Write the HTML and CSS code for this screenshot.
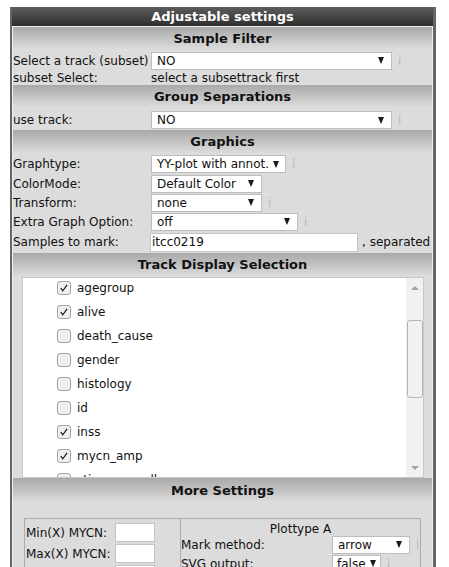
FILE: index.html
```html
<!DOCTYPE html>
<html>
<head>
<meta charset="utf-8">
<link rel="stylesheet" href="styles.css">
</head>
<body>
<div class="panel">
  <div class="title">Adjustable settings</div>
  <div class="inner">
    <div class="sec-head h23">Sample Filter</div>
    <div class="row h21">
      <span class="label">Select a track (subset)</span>
      <div class="sel w241"><span>NO</span><span class="arr"></span></div>
      <span class="info">i</span>
    </div>
    <div class="row h14">
      <span class="label">subset Select:</span>
      <span class="note">select a subsettrack first</span>
    </div>

    <div class="sec-head h23">Group Separations</div>
    <div class="row h22 pt1">
      <span class="label">use track:</span>
      <div class="sel w241"><span>NO</span><span class="arr"></span></div>
      <span class="info">i</span>
    </div>

    <div class="sec-head h24">Graphics</div>
    <div class="row h20">
      <span class="label">Graphtype:</span>
      <div class="sel w135"><span>YY-plot with annot.</span><span class="arr"></span></div>
      <span class="info">i</span>
    </div>
    <div class="row h19">
      <span class="label">ColorMode:</span>
      <div class="sel w111"><span>Default Color</span><span class="arr"></span></div>
    </div>
    <div class="row h19">
      <span class="label">Transform:</span>
      <div class="sel w111"><span>none</span><span class="arr"></span></div>
      <span class="info">i</span>
    </div>
    <div class="row h19">
      <span class="label">Extra Graph Option:</span>
      <div class="sel w147"><span>off</span><span class="arr"></span></div>
      <span class="info">i</span>
    </div>
    <div class="row h22">
      <span class="label">Samples to mark:</span>
      <div class="txt w208">itcc0219</div>
      <span class="after">, separated</span>
    </div>

    <div class="sec-head h24">Track Display Selection</div>
    <div class="list">
      <div class="items">
        <div class="item"><span class="cb on"><svg viewBox="0 0 14 14"><path d="M3.2 7.2 L5.6 10.2 L10.6 3.4"/></svg></span><span>agegroup</span></div>
        <div class="item"><span class="cb on"><svg viewBox="0 0 14 14"><path d="M3.2 7.2 L5.6 10.2 L10.6 3.4"/></svg></span><span>alive</span></div>
        <div class="item"><span class="cb"></span><span>death_cause</span></div>
        <div class="item"><span class="cb"></span><span>gender</span></div>
        <div class="item"><span class="cb"></span><span>histology</span></div>
        <div class="item"><span class="cb"></span><span>id</span></div>
        <div class="item"><span class="cb on"><svg viewBox="0 0 14 14"><path d="M3.2 7.2 L5.6 10.2 L10.6 3.4"/></svg></span><span>inss</span></div>
        <div class="item"><span class="cb on"><svg viewBox="0 0 14 14"><path d="M3.2 7.2 L5.6 10.2 L10.6 3.4"/></svg></span><span>mycn_amp</span></div>
        <div class="item"><span class="cb"></span><span>stime_overall</span></div>
      </div>
      <div class="scrollbar">
        <span class="up"></span>
        <span class="thumb"></span>
        <span class="down"></span>
      </div>
    </div>

    <div class="sec-head h25">More Settings</div>
    <div class="more">
      <div class="cell left">
        <div class="mrow"><span class="mlabel">Min(X) MYCN:</span><div class="txt w40"></div></div>
        <div class="mrow"><span class="mlabel">Max(X) MYCN:</span><div class="txt w40"></div></div>
        <div class="mrow"><span class="mlabel"></span><div class="txt w40"></div></div>
      </div>
      <div class="cell right">
        <div class="ptitle">Plottype A</div>
        <div class="prow">
          <span class="plabel">Mark method:</span>
          <div class="sel w78"><span>arrow</span><span class="arr"></span></div>
          <span class="info">i</span>
        </div>
        <div class="prow">
          <span class="plabel">SVG output:</span>
          <div class="sel w49"><span>false</span><span class="arr"></span></div>
          <span class="info">i</span>
        </div>
      </div>
    </div>
  </div>
</div>
</body>
</html>
```

FILE: styles.css
```css
html, body {
  margin: 0;
  padding: 0;
  background: #fff;
  font-family: "DejaVu Sans", Verdana, sans-serif;
  font-size: 12px;
  color: #111;
}
body {
  padding: 7px 0 0 10px;
}
.panel {
  width: 421px;
  border-left: 2px solid #666;
  border-right: 3px solid #666;
  background: #dcdcdc;
}
.title {
  height: 19px;
  line-height: 19px;
  text-align: center;
  font-weight: bold;
  font-size: 13px;
  color: #fff;
  background: linear-gradient(#5c5c5c, #2f2f2f);
}
.inner {
  border-top: 1px solid #eee;
  border-left: 1px solid #eee;
  border-right: 1px solid #eee;
  background: #dcdcdc;
  height: 560px;
}
.sec-head {
  text-align: center;
  font-weight: bold;
  font-size: 13px;
  color: #111;
  background: linear-gradient(#a9a9a9, #dedede);
}
.h23 { height: 23px; line-height: 23px; }
.h24 { height: 24px; line-height: 24px; }
.h25 { height: 25px; line-height: 25px; }

.row {
  display: flex;
  align-items: center;
  box-sizing: border-box;
}
.h14 { height: 14px; }
.h19 { height: 19px; }
.h20 { height: 20px; }
.h21 { height: 21px; }
.h22 { height: 22px; }
.pt1 { padding-top: 2px; }
.label {
  width: 138px;
  flex: none;
  white-space: nowrap;
}
.note { white-space: nowrap; }

.sel {
  box-sizing: border-box;
  height: 18px;
  background: #fff;
  border: 1px solid #bdbdbd;
  display: flex;
  align-items: center;
  justify-content: space-between;
  padding: 0 7px 0 5px;
  white-space: nowrap;
  overflow: hidden;
  flex: none;
}
.arr {
  flex: none;
  width: 0;
  height: 0;
  margin-left: 4px;
  border-left: 3.5px solid transparent;
  border-right: 3.5px solid transparent;
  border-top: 7px solid #1a1a1a;
}
.w241 { width: 241px; }
.w135 { width: 135px; }
.w111 { width: 111px; }
.w147 { width: 147px; }
.w78 { width: 78px; }
.w49 { width: 49px; padding-left: 4px; padding-right: 5px; }
.info {
  color: #b8b8b8;
  margin-left: 6px;
  font-size: 12px;
}
.txt {
  box-sizing: border-box;
  height: 19px;
  line-height: 17px;
  background: #fff;
  border: 1px solid #c4c4c4;
  padding-left: 1px;
  flex: none;
}
.w208 { width: 208px; margin-left: -1px; }
.w40 { width: 40px; }
.after { margin-left: 4px; white-space: nowrap; }

.list {
  box-sizing: border-box;
  margin: 0 8px 0 9px;
  height: 201px;
  border: 1px solid #c8c8c8;
  background: #fff;
  display: flex;
  overflow: hidden;
}
.items {
  flex: 1;
  padding-left: 34px;
  margin-top: -2px;
}
.item {
  height: 24px;
  display: flex;
  align-items: center;
  gap: 6px;
}
.cb {
  box-sizing: border-box;
  width: 14px;
  height: 14px;
  border: 1px solid #a4a4a4;
  border-radius: 3px;
  background: #efefef;
  display: flex;
}
.cb svg {
  width: 12px;
  height: 12px;
  fill: none;
  stroke: #1a1a1a;
  stroke-width: 1.4;
}
.scrollbar {
  width: 17px;
  flex: none;
  background: #f1f1f1;
  display: flex;
  flex-direction: column;
  align-items: center;
}
.up {
  margin-top: 8px;
  width: 0;
  height: 0;
  border-left: 4px solid transparent;
  border-right: 4px solid transparent;
  border-bottom: 4px solid #a3a3a3;
}
.thumb {
  box-sizing: border-box;
  margin-top: 30px;
  width: 16px;
  height: 78px;
  border: 1px solid #b4b4b4;
  border-radius: 3px;
  background: #f1f1f1;
}
.down {
  margin-top: 68px;
  width: 0;
  height: 0;
  border-left: 4px solid transparent;
  border-right: 4px solid transparent;
  border-top: 4px solid #a3a3a3;
}

.more {
  margin: 15px 11px 0 11px;
  width: 397px;
  box-sizing: border-box;
  border: 1px solid #acacac;
  display: flex;
}
.cell.left {
  width: 156px;
  box-sizing: border-box;
  border-right: 1px solid #acacac;
  padding: 3px 0 0 1px;
}
.mrow {
  display: flex;
  align-items: center;
  height: 21px;
}
.mlabel {
  width: 89px;
  white-space: nowrap;
}
.cell.right {
  flex: 1;
  padding-top: 3px;
}
.ptitle {
  text-align: center;
  height: 13px;
  line-height: 14px;
}
.prow {
  display: flex;
  align-items: center;
  height: 19px;
}
.plabel {
  width: 151px;
  white-space: nowrap;
}
```
